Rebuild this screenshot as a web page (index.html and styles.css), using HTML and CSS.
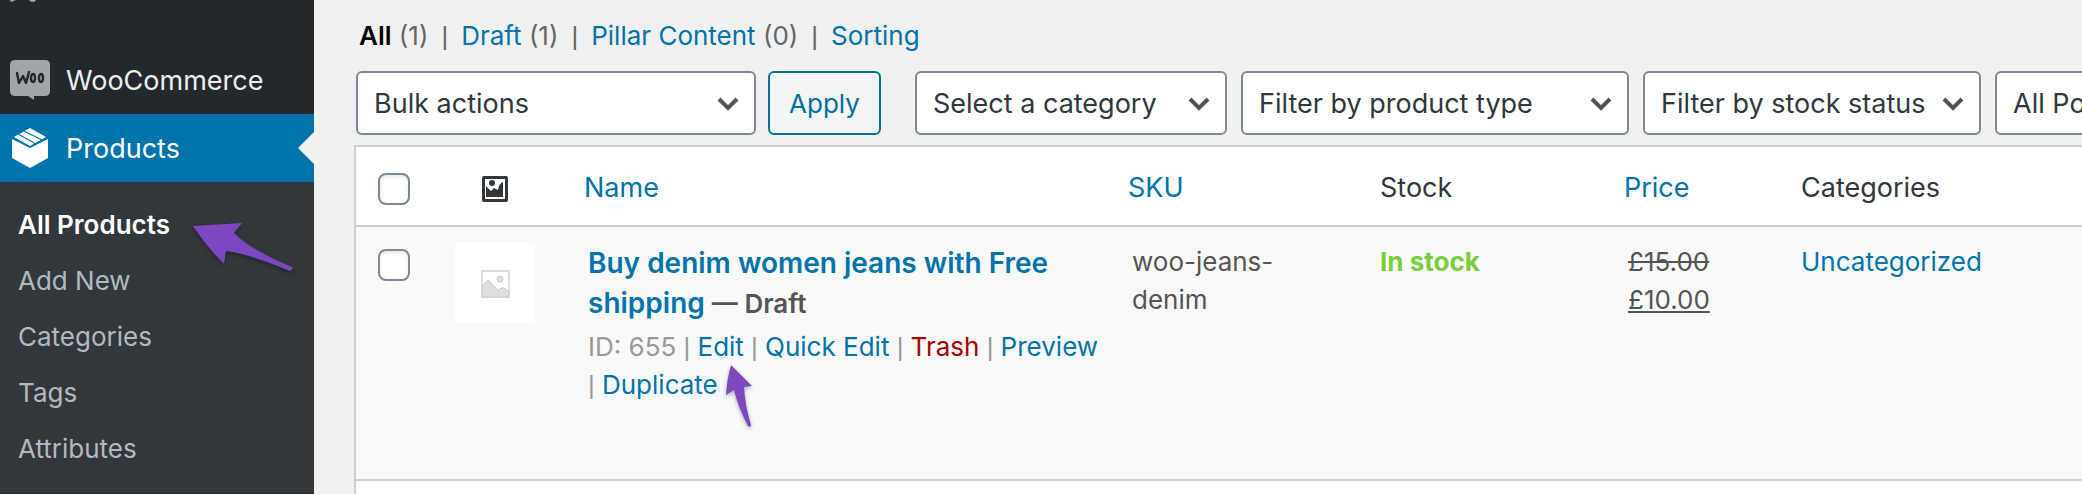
FILE: index.html
```html
<!DOCTYPE html>
<html lang="en">
<head>
    <meta charset="utf-8">
    <title>Products</title>
    <link rel="stylesheet" href="styles.css">
</head>
<body>
    <div class="admin">
        <nav class="sidebar">
            <div class="menu-top">
                <svg class="cut-icon" width="190" height="6" viewBox="0 0 190 6" fill="#a0a5aa">
                    <path d="M10 0h6l-5 2zM29 0h7q-1 2-3 2-3 0-4-2z"/>
                </svg>
            </div>
            <a class="menu-item" href="#">
                <svg class="menu-icon" width="40" height="40" viewBox="0 0 40 40">
                    <path fill="#a0a5aa" d="M5 0h30q5 0 5 5v26q0 5-5 5H24v4l-6-4H5q-5 0-5-5V5q0-5 5-5z"/>
                    <path fill="none" stroke="#23282d" stroke-width="2.4" stroke-linecap="round" stroke-linejoin="round" d="M7 13l2 10 4-7 3 7 3-11"/>
                    <ellipse cx="23" cy="18" rx="2" ry="4" fill="none" stroke="#23282d" stroke-width="2.4"/>
                    <ellipse cx="31" cy="18" rx="2" ry="4" fill="none" stroke="#23282d" stroke-width="2.4"/>
                </svg>
                <span>WooCommerce</span>
            </a>
            <a class="menu-item current" href="#">
                <svg class="menu-icon" width="40" height="40" viewBox="0 0 40 40">
                    <path fill="#fff" d="M20 0l16 9-16 9L4 9zM2 11l18 9 18-9v19L20 40 2 30z"/>
                    <path stroke="#0073aa" stroke-width="1.2" d="M8 6l18 10M14 3l18 9"/>
                </svg>
                <span>Products</span>
            </a>
            <ul class="submenu">
                <li><a class="active" href="#">All Products</a></li>
                <li><a href="#">Add New</a></li>
                <li><a href="#">Categories</a></li>
                <li><a href="#">Tags</a></li>
                <li><a href="#">Attributes</a></li>
            </ul>
            <svg class="arrow arrow-menu" width="106" height="52" viewBox="0 0 106 52">
                <path fill="#7b48c0" d="M3 4L52 1l-8 10q15 16 58 34 2 2-2 4Q60 32 36 29l-2 13Q17 25 3 4z"/>
            </svg>
        </nav>

        <main class="content">
            <ul class="views">
                <li><a class="active" href="#">All</a> (1)</li>
                <li><a href="#">Draft</a> (1)</li>
                <li><a href="#">Pillar Content</a> (0)</li>
                <li><a href="#">Sorting</a></li>
            </ul>

            <form class="filters">
                <select class="bulk" aria-label="Bulk actions"><option>Bulk actions</option></select>
                <button type="button">Apply</button>
                <select class="category" aria-label="Category"><option>Select a category</option></select>
                <select class="type" aria-label="Product type"><option>Filter by product type</option></select>
                <select class="stock-status" aria-label="Stock status"><option>Filter by stock status</option></select>
                <select class="posts" aria-label="Posts"><option>All Posts</option></select>
            </form>

            <table class="products">
                <thead>
                    <tr>
                        <th class="col-check"><input type="checkbox" aria-label="Select all"></th>
                        <th class="col-thumb">
                            <svg width="26" height="26" viewBox="0 0 26 26">
                                <path fill="#32373c" fill-rule="evenodd" d="M2 0h22q2 0 2 2v22q0 2-2 2H2q-2 0-2-2V2q0-2 2-2zM3 3v20h20V3z"/>
                                <circle cx="10" cy="7" r="3" fill="#32373c"/>
                                <path fill="#32373c" d="M4 10l5 5 3-3 4 2q1-7 5-8v15H4z"/>
                            </svg>
                        </th>
                        <th class="col-name"><a href="#">Name</a></th>
                        <th class="col-sku"><a href="#">SKU</a></th>
                        <th class="col-stock">Stock</th>
                        <th class="col-price"><a href="#">Price</a></th>
                        <th class="col-cat">Categories</th>
                    </tr>
                </thead>
                <tbody>
                    <tr>
                        <td class="col-check"><input type="checkbox" aria-label="Select product"></td>
                        <td class="col-thumb">
                            <svg width="80" height="80" viewBox="0 0 80 80">
                                <path fill="#fff" d="M0 0h80v80H0z"/>
                                <path fill="#dcdee1" fill-rule="evenodd" d="M26 27h29v28H26zM28 29v24h25V29z"/>
                                <circle cx="45" cy="36" r="3" fill="#dcdee1" stroke="#c9ccd0"/>
                                <path fill="#dcdee1" stroke="#c9ccd0" d="M27 43l6-6 10 10q5-4 8-1l3 3v5H27z"/>
                            </svg>
                        </td>
                        <td class="col-name">
                            <strong><a href="#">Buy denim women jeans with Free shipping</a> <span class="state">— Draft</span></strong>
                            <div class="row-actions">
                                ID: 655<span class="sep"> | </span><a href="#" class="edit">Edit<svg class="arrow arrow-edit" width="32" height="68" viewBox="0 0 32 68"><path fill="#7b48c0" d="M6 1l21 21-8 1q1 18 7 38 0 3-3 1Q13 43 9 26l-8 5Q2 15 6 1z"/></svg></a><span class="sep"> | </span><a href="#">Quick Edit</a><span class="sep"> | </span><a href="#" class="trash">Trash</a><span class="sep"> | </span><a href="#">Preview</a><span class="sep"> | </span><a href="#">Duplicate</a>
                            </div>
                        </td>
                        <td class="col-sku">woo-jeans-denim</td>
                        <td class="col-stock"><mark>In stock</mark></td>
                        <td class="col-price"><del>£15.00</del> <ins>£10.00</ins></td>
                        <td class="col-cat"><a href="#">Uncategorized</a></td>
                    </tr>
                </tbody>
                <tfoot>
                    <tr>
                        <td colspan="7"></td>
                    </tr>
                </tfoot>
            </table>
        </main>
    </div>
</body>
</html>
```
FILE: styles.css
```css
* {
    box-sizing: border-box;
}

body {
    margin: 0;
    background-color: #f1f1f1;
    color: #555;
    font-family: Inter, "Liberation Sans", sans-serif;
    font-size: 26px;
    line-height: 38px;
    overflow: hidden;
}

a {
    color: #0073aa;
    text-decoration: none;
}

ul {
    list-style: none;
    margin: 0;
    padding: 0;
}

.admin {
    display: flex;
    height: 100vh;
}

.sidebar {
    position: relative;
    flex: 0 0 314px;
    background-color: #23282d;
}

.menu-top {
    height: 46px;
}

.cut-icon {
    display: block;
}

.menu-item {
    position: relative;
    display: flex;
    align-items: center;
    gap: 16px;
    height: 68px;
    padding-left: 10px;
    color: #eee;
    font-size: 27px;
}

.menu-item span {
    padding-top: 2px;
}

.menu-item.current {
    background-color: #0073aa;
    color: #fff;
}

/* notch pointing at the current item */
.menu-item.current::after {
    content: "";
    position: absolute;
    right: 0;
    top: 18px;
    border: 16px solid transparent;
    border-left: 0;
    border-right-color: #f1f1f1;
}

.submenu {
    padding: 15px 0 16px;
    background-color: #32373c;
}

.submenu a {
    display: block;
    height: 56px;
    padding: 0 18px;
    color: #b4b9be;
    line-height: 56px;
}

.submenu .active {
    color: #fff;
    font-weight: 600;
}

.arrow {
    position: absolute;
    filter: drop-shadow(0 2px 2px rgba(0, 0, 0, 0.3));
}

.arrow-menu {
    left: 190px;
    top: 222px;
}

.content {
    flex: 1;
    min-width: 0;
    padding: 17px 0 0 40px;
    overflow: hidden;
}

.views {
    display: flex;
    padding-left: 5px;
    color: #666;
}

.views li + li::before {
    content: "|";
    padding: 0 13px;
    font-family: "Liberation Sans", sans-serif;
}

.views .active {
    color: #000;
    font-weight: 600;
}

.filters {
    display: flex;
    padding: 16px 0 10px 2px;
}

select,
button {
    flex: none;
    height: 64px;
    margin: 0 14px 0 0;
    border: 2px solid #7e8993;
    border-radius: 6px;
    background-color: #fff;
    color: #32373c;
    font-family: inherit;
    font-size: 27px;
}

select {
    appearance: none;
    padding: 0 48px 0 16px;
    background-image: url("data:image/svg+xml,%3Csvg xmlns='http://www.w3.org/2000/svg' width='22' height='14' viewBox='0 0 22 14'%3E%3Cpath d='M2 2l9 9 9-9' fill='none' stroke='%23555' stroke-width='4'/%3E%3C/svg%3E");
    background-repeat: no-repeat;
    background-position: right 15px top 24px;
}

button {
    width: 113px;
    margin-right: 34px;
    padding: 0;
    border-color: #0071a1;
    background-color: #f3f5f6;
    color: #0071a1;
    font-size: 26px;
}

.bulk {
    width: 400px;
    margin-right: 12px;
}

.category {
    width: 312px;
}

.type {
    width: 388px;
}

.stock-status {
    width: 338px;
}

.posts {
    width: 300px;
}

.products {
    width: 100%;
    border: 2px solid #ccd0d4;
    border-right: 0;
    border-spacing: 0;
    background-color: #fff;
    table-layout: fixed;
}

th,
td {
    padding: 16px 20px;
    text-align: left;
    vertical-align: top;
}

th {
    height: 80px;
    padding: 3px 16px 0;
    border-bottom: 2px solid #ccd0d4;
    color: #32373c;
    font-size: 27px;
    font-weight: 400;
    vertical-align: middle;
}

td {
    height: 254px;
    border-bottom: 2px solid #ccd0d4;
    background-color: #f9f9f9;
}

.col-check {
    width: 84px;
    padding: 22px 0 0 22px;
}

th.col-check {
    padding-top: 26px;
    vertical-align: top;
}

.col-thumb {
    width: 128px;
    padding-left: 0;
    padding-right: 18px;
    text-align: center;
}

.col-name {
    width: 544px;
}

td.col-name {
    padding-right: 8px;
}

.col-sku {
    width: 252px;
}

.col-stock {
    width: 244px;
}

.col-price {
    width: 177px;
}

.col-stock,
.col-cat {
    padding-left: 16px;
}

tfoot td {
    height: 80px;
    background-color: #fff;
}

input {
    display: block;
    appearance: none;
    width: 32px;
    height: 32px;
    margin: 0;
    border: 2px solid #7e8993;
    border-radius: 8px;
    background-color: #fff;
    box-shadow: inset 0 2px 4px rgba(0, 0, 0, 0.1);
}

th svg {
    vertical-align: middle;
}

td svg {
    vertical-align: top;
}

td strong {
    display: block;
    font-size: 28px;
    font-weight: 600;
    line-height: 40px;
}

.state {
    font-size: 26px;
}

.row-actions {
    padding-top: 4px;
    color: #999;
}

.sep {
    font-family: "Liberation Sans", sans-serif;
}

.edit {
    position: relative;
}

.arrow-edit {
    left: 27px;
    top: 33px;
}

.row-actions .trash {
    color: #a00;
}

mark {
    background: none;
    color: #7ad03a;
    font-weight: 700;
}
```
